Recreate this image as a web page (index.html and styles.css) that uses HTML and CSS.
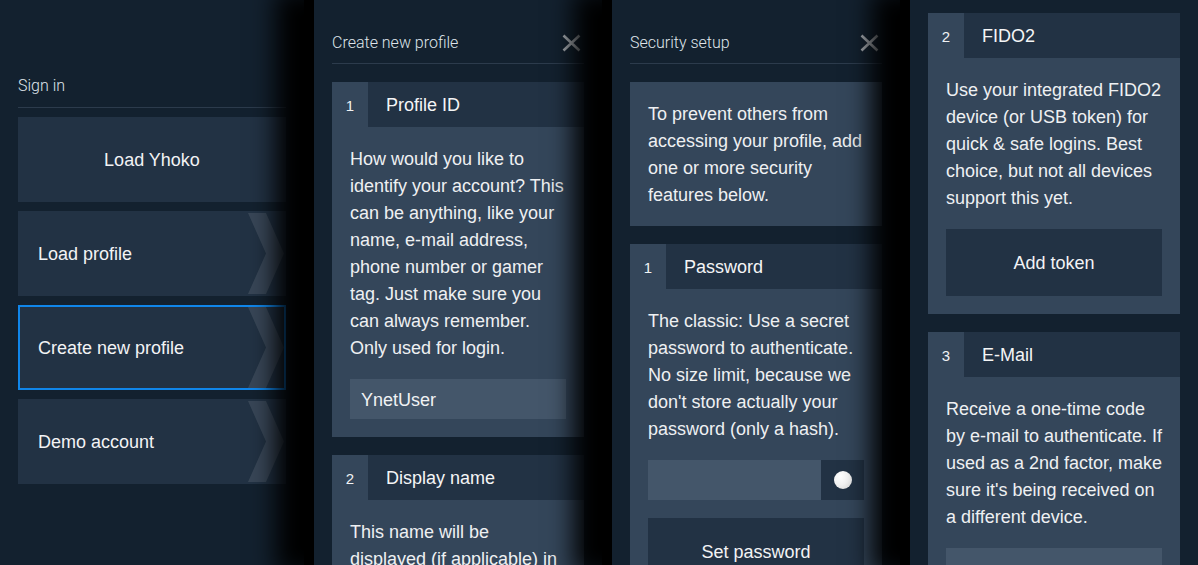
FILE: index.html
```html
<!DOCTYPE html>
<html lang="en">
<head>
<meta charset="utf-8">
<title>Sign in</title>
<link rel="stylesheet" href="styles.css">
</head>
<body>
<div class="app">
  <section class="panel panel-signin">
    <header class="panel-head">
      <h2 class="panel-title">Sign in</h2>
    </header>
    <nav class="menu">
      <div class="menu-item menu-item-center">Load Yhoko</div>
      <div class="menu-item"><span>Load profile</span>
        <svg class="chevron" viewBox="0 0 36 81" width="36" height="81"><polygon points="0,0 18,0 36,40.5 18,81 0,81 18,40.5"/></svg>
      </div>
      <div class="menu-item is-active"><span>Create new profile</span>
        <svg class="chevron" viewBox="0 0 36 81" width="36" height="81"><polygon points="0,0 18,0 36,40.5 18,81 0,81 18,40.5"/></svg>
      </div>
      <div class="menu-item"><span>Demo account</span>
        <svg class="chevron" viewBox="0 0 36 81" width="36" height="81"><polygon points="0,0 18,0 36,40.5 18,81 0,81 18,40.5"/></svg>
      </div>
    </nav>
  </section>

  <section class="panel panel-layer">
    <header class="panel-head panel-head-top">
      <h2 class="panel-title">Create new profile</h2>
      <svg class="close" viewBox="0 0 19 18" width="19" height="18"><path d="M1.5 1.5 L17.5 16.5 M17.5 1.5 L1.5 16.5"/></svg>
    </header>
    <div class="step">
      <div class="step-head"><span class="step-num">1</span><span class="step-title">Profile ID</span></div>
      <div class="step-body">
        <p>How would you like to<br>identify your account? This<br>can be anything, like your<br>name, e-mail address,<br>phone number or gamer<br>tag. Just make sure you<br>can always remember.<br>Only used for login.</p>
        <div class="field">YnetUser</div>
      </div>
    </div>
    <div class="step">
      <div class="step-head"><span class="step-num">2</span><span class="step-title">Display name</span></div>
      <div class="step-body">
        <p>This name will be<br>displayed (if applicable) in</p>
      </div>
    </div>
  </section>

  <section class="panel panel-layer">
    <header class="panel-head panel-head-top">
      <h2 class="panel-title">Security setup</h2>
      <svg class="close" viewBox="0 0 19 18" width="19" height="18"><path d="M1.5 1.5 L17.5 16.5 M17.5 1.5 L1.5 16.5"/></svg>
    </header>
    <div class="intro"><p>To prevent others from<br>accessing your profile, add<br>one or more security<br>features below.</p></div>
    <div class="step">
      <div class="step-head"><span class="step-num">1</span><span class="step-title">Password</span></div>
      <div class="step-body">
        <p>The classic: Use a secret<br>password to authenticate.<br>No size limit, because we<br>don't store actually your<br>password (only a hash).</p>
        <div class="field-row">
          <div class="field field-grow"></div>
          <div class="toggle"><span class="knob"></span></div>
        </div>
        <div class="btn">Set password</div>
      </div>
    </div>
  </section>

  <section class="panel panel-layer panel-cont">
    <div class="step">
      <div class="step-head"><span class="step-num">2</span><span class="step-title">FIDO2</span></div>
      <div class="step-body">
        <p>Use your integrated FIDO2<br>device (or USB token) for<br>quick &amp; safe logins. Best<br>choice, but not all devices<br>support this yet.</p>
        <div class="btn">Add token</div>
      </div>
    </div>
    <div class="step">
      <div class="step-head"><span class="step-num">3</span><span class="step-title">E-Mail</span></div>
      <div class="step-body">
        <p>Receive a one-time code<br>by e-mail to authenticate. If<br>used as a 2nd factor, make<br>sure it's being received on<br>a different device.</p>
        <div class="field"></div>
      </div>
    </div>
  </section>
</div>
</body>
</html>
```

FILE: styles.css
```css
* { box-sizing: border-box; }

html, body {
  margin: 0;
  padding: 0;
  background: #000;
}

body {
  font-family: "Liberation Sans", Arial, sans-serif;
  color: #eef0f2;
  font-size: 18px;
  line-height: 27px;
}

.app {
  display: flex;
  gap: 10px;
  width: 1198px;
  height: 565px;
  overflow: hidden;
}

.panel {
  position: relative;
  flex: none;
  width: 288px;
  height: 565px;
  padding: 0 18px;
  background: #13212f;
}

.panel-signin {
  width: 304px;
  padding-top: 74px;
}

.panel-layer {
  box-shadow: -28px 0 24px 10px #000;
}

.panel-cont {
  padding-top: 13px;
}

.panel-head {
  display: flex;
  align-items: center;
  justify-content: space-between;
  padding-bottom: 9px;
  border-bottom: 1px solid #2c3b4c;
  margin-bottom: 9px;
}

.panel-head-top {
  margin-top: 31px;
  padding-bottom: 8px;
  margin-bottom: 18px;
}

.panel-title {
  margin: 0;
  font-family: Roboto, "Liberation Sans", sans-serif;
  font-weight: 300;
  font-size: 16px;
  line-height: 24px;
  color: #dfe4ea;
}

.close {
  margin-right: 3px;
  fill: none;
  stroke: #a7acb2;
  stroke-width: 2.6;
}

/* sign-in menu */
.menu {
  display: flex;
  flex-direction: column;
  gap: 9px;
}

.menu-item {
  display: flex;
  align-items: center;
  height: 85px;
  padding-left: 20px;
  padding-right: 2px;
  background: #223244;
  color: #f2f3f5;
}

.menu-item > span {
  padding-top: 2px;
}

.menu-item-center {
  justify-content: center;
  padding: 1px 0 0 0;
}

.menu-item.is-active {
  border: 2px solid #1086ea;
  padding-left: 18px;
  padding-right: 0;
}

.chevron {
  margin-left: auto;
  fill: rgba(255, 255, 255, 0.1);
}

/* step cards */
.step {
  background: #34465a;
  margin-bottom: 18px;
}

.step-head {
  display: flex;
  height: 45px;
}

.step-num {
  display: flex;
  align-items: center;
  justify-content: center;
  width: 36px;
  padding-top: 2px;
  font-size: 15px;
  color: #f0f2f4;
}

.step-title {
  flex: 1;
  display: flex;
  align-items: center;
  padding-left: 18px;
  padding-top: 2px;
  background: #223244;
  color: #f4f5f6;
}

.step-body {
  padding: 18px;
}

.step-body p,
.intro p {
  margin: 0;
  padding-top: 1px;
  margin-bottom: -1px;
  white-space: nowrap;
}

.intro {
  background: #34465a;
  padding: 18px;
  margin-bottom: 18px;
}

.field {
  margin-top: 18px;
  height: 40px;
  line-height: 40px;
  padding-left: 11px;
  padding-top: 1px;
  background: #44566a;
  color: #f0f2f4;
}

.field-row {
  display: flex;
  margin-top: 18px;
  height: 40px;
}

.field-grow {
  flex: 1;
  margin-top: 0;
}

.toggle {
  width: 43px;
  display: flex;
  align-items: center;
  justify-content: center;
  background: #223244;
}

.knob {
  width: 18px;
  height: 18px;
  border-radius: 50%;
  background: radial-gradient(circle at 35% 30%, #ffffff 0%, #f2f2f2 50%, #d6d6d6 100%);
}

.btn {
  margin-top: 18px;
  height: 67px;
  padding-top: 2px;
  display: flex;
  align-items: center;
  justify-content: center;
  background: #223244;
  color: #f2f3f5;
}
```
